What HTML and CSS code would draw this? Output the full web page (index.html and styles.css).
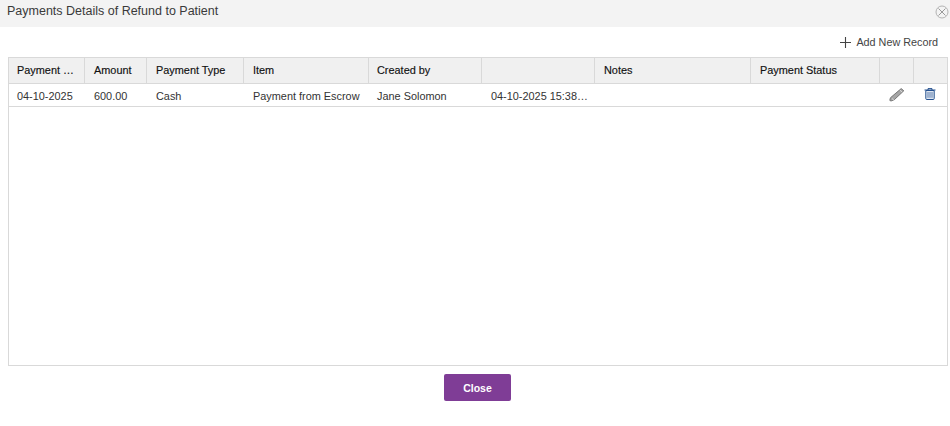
FILE: index.html
```
<!DOCTYPE html>
<html lang="en">
<head>
<meta charset="utf-8">
<title>Payments Details of Refund to Patient</title>
<link rel="stylesheet" href="styles.css">
</head>
<body>
<header class="titlebar">
  <h1 class="title">Payments Details of Refund to Patient</h1>
  <button class="close-x" aria-label="Close">
    <svg width="14" height="14" viewBox="0 0 14 14" fill="none" stroke="#b4b4b4" stroke-width="1"><circle cx="7" cy="7" r="6"/><path d="M3.5 3.5l7 7M10.5 3.5l-7 7" stroke="#999"/></svg>
  </button>
</header>
<div class="toolbar">
  <a class="add" href="#">
    <svg width="11" height="11" viewBox="0 0 11 11" stroke="#444" stroke-width="1.1"><path d="M5.5 0v11M0 5.5h11"/></svg>
    <span>Add New Record</span>
  </a>
</div>
<div class="grid">
  <table class="table">
    <colgroup>
      <col class="c1"><col class="c2"><col class="c3"><col class="c4"><col class="c5"><col class="c6"><col class="c7"><col class="c8"><col class="c9"><col class="c10">
    </colgroup>
    <thead>
      <tr>
        <th>Payment Date</th><th>Amount</th><th>Payment Type</th><th>Item</th><th>Created by</th><th></th><th>Notes</th><th>Payment Status</th><th></th><th></th>
      </tr>
    </thead>
    <tbody>
      <tr>
        <td>04-10-2025</td><td>600.00</td><td>Cash</td><td>Payment from Escrow</td><td>Jane Solomon</td><td>04-10-2025 15:38:22</td><td></td><td></td>
        <td class="icon-cell">
          <svg width="16" height="14" viewBox="0 0 16 14"><path d="M12.2.6l2.6 2.2-9.6 9-3.2 1.2-1.2-.6.6-2.6z" fill="#a6a6a6" stroke="#6e6e6e" stroke-width=".9" stroke-linejoin="round"/><path d="M3 10.6l2 1.6M10.8 2l2.4 2.2" stroke="#e8e8e8" stroke-width=".8" fill="none"/></svg>
        </td>
        <td class="icon-cell">
          <svg class="trash" width="12" height="12" viewBox="0 0 12 12" fill="none"><path d="M.5 2h11M4 2V.6h4V2" stroke="#24508f" stroke-width="1"/><path d="M1.8 2.5h8.4v8.1a.9.9 0 0 1-.9.9H2.7a.9.9 0 0 1-.9-.9z" fill="#dfe6f0" stroke="#24508f" stroke-width="1"/><path d="M4 4v5.8M6 4v5.8M8 4v5.8" stroke="#5f7fae" stroke-width="1"/></svg>
        </td>
      </tr>
    </tbody>
  </table>
</div>
<div class="actions">
  <button class="btn-close">Close</button>
</div>
</body>
</html>
```
FILE: styles.css
```
* { box-sizing: border-box; }
html, body { margin: 0; padding: 0; background: #fff; }
body {
  width: 950px;
  height: 426px;
  overflow: hidden;
  font-family: "Liberation Sans", Arial, sans-serif;
  font-size: 11px;
  color: #333;
}
.titlebar {
  height: 27px;
  background: #f3f3f3;
  display: flex;
  align-items: flex-start;
  justify-content: space-between;
  padding: 3px 1px 0 7px;
}
.title {
  margin: 0;
  font-size: 12.5px;
  font-weight: 400;
  line-height: 16px;
  color: #3a3a3a;
}
.close-x {
  border: 0;
  background: none;
  padding: 0;
  margin-top: 2px;
  width: 14px;
  height: 14px;
  display: block;
}
.close-x svg { display: block; }
.toolbar {
  height: 30px;
  display: flex;
  justify-content: flex-end;
  align-items: center;
  padding: 0 12px 0 0;
}
.add {
  display: flex;
  align-items: center;
  gap: 5px;
  color: #444;
  text-decoration: none;
  font-size: 10.8px;
}
.grid {
  margin: 0 2px 0 8px;
  height: 309px;
  border: 1px solid #d9d9d9;
}
.table {
  border-collapse: separate;
  border-spacing: 0;
  table-layout: fixed;
  width: 938px;
}
.c1 { width: 76px; }
.c2 { width: 62px; }
.c3 { width: 97px; }
.c4 { width: 125px; }
.c5 { width: 113px; }
.c6 { width: 113px; }
.c7 { width: 156px; }
.c8 { width: 129px; }
.c9 { width: 34px; }
.c10 { width: 33px; }
th, td {
  padding: 0 6px 0 9px;
  text-align: left;
  white-space: nowrap;
  overflow: hidden;
  text-overflow: ellipsis;
  font-size: 10.9px;
}
th:nth-child(1), td:nth-child(1),
th:nth-child(5), td:nth-child(5) { padding-left: 8px; }
th {
  height: 26px;
  padding-bottom: 1px;
  background: #f0f0f0;
  color: #111;
  font-weight: 400;
  border-right: 1px solid #d9d9d9;
  border-bottom: 1px solid #d9d9d9;
  -webkit-text-stroke: 0.15px #111;
}
th:last-child { border-right: 0; }
td {
  height: 23px;
  padding-top: 1px;
  color: #333;
  border-bottom: 1px solid #d9d9d9;
}
.icon-cell { padding: 0; text-align: center; overflow: visible; }
.icon-cell svg { display: inline-block; vertical-align: top; margin-top: -1px; }
.icon-cell .trash { margin-right: 1px; }
.actions {
  display: flex;
  justify-content: center;
  padding: 8px 0 0 5px;
}
.btn-close {
  width: 67px;
  height: 27px;
  border: 0;
  border-radius: 2px;
  background: #7f3d96;
  color: #fff;
  font-family: "Liberation Sans", Arial, sans-serif;
  font-size: 10.5px;
  font-weight: 700;
  padding: 0;
}
```
